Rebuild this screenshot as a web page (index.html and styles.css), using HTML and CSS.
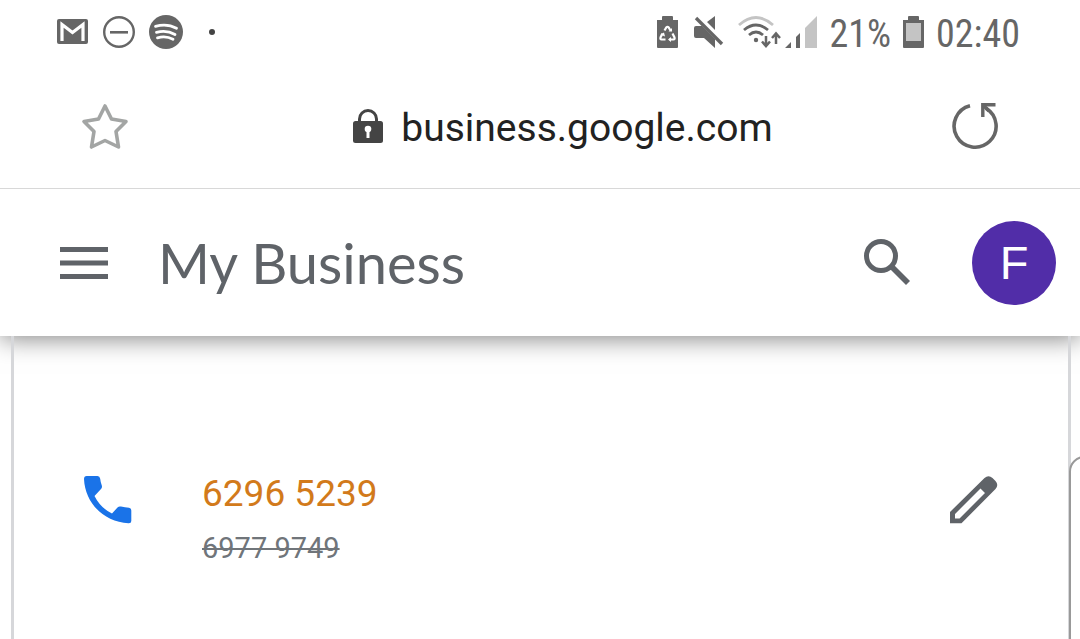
FILE: index.html
```
<!DOCTYPE html>
<html lang="en">
<head>
<meta charset="utf-8">
<meta name="viewport" content="width=device-width, initial-scale=1">
<title>My Business</title>
<link rel="stylesheet" href="styles.css">
</head>
<body>
<div class="status">
  <div class="status-group notices">
    <svg width="32" height="32" viewBox="0 0 32 32" aria-label="Mail"><rect x="0" y="3" width="31" height="25" rx="2" fill="#666"/><path d="M5 25V8.500L15.500 16.500L26 8.500V25" fill="none" stroke="#fff" stroke-width="3.200"/></svg>
    <svg width="32" height="32" viewBox="0 0 32 32" aria-label="Do not disturb"><circle cx="16" cy="16" r="14.800" fill="none" stroke="#666" stroke-width="2.400"/><path d="M7 16.300H25" stroke="#666" stroke-width="2.600"/></svg>
    <svg width="34" height="34" viewBox="0 0 34 34" aria-label="Music"><circle cx="17" cy="17" r="17" fill="#666"/><path d="M6.500 11.300Q18 8 27.500 13.300M7.500 17.300Q17.500 14.500 26 19.500M8.500 22.800Q17 20.500 24 24.300" fill="none" stroke="#fff" stroke-width="2.800" stroke-linecap="round"/></svg>
    <span class="dot"></span>
  </div>
  <div class="status-group system">
    <svg width="22" height="32" viewBox="0 0 22 32" aria-label="Battery saver"><path d="M0 4H5V1Q5 0 6 0H15Q16 0 16 1V4H21V31Q21 32 20 32H1Q0 32 0 31Z" fill="#666"/><path d="M7.500 14.500L9.300 11.500Q10.500 10 11.700 11.500L13.500 14.500M15.500 17.500L17.500 21.500Q18 23.500 16.500 23.500H12.500M8.500 23.500H4.500Q3 23.500 3.500 21.500L5.500 17.500" fill="none" stroke="#fff" stroke-width="2.200"/><path d="M11.500 15.500H15V12ZM14 21V26L11 23.500ZM3.500 18.500L7 16.500L8 20.500Z" fill="#fff"/></svg>
    <svg class="mute" width="30" height="32" viewBox="0 0 30 32" aria-label="Muted"><path d="M0 12Q0 10 2 10H8L21 23V32L10 22H2Q0 22 0 20ZM13 6L21 0V14Z" fill="#666"/><path d="M2 2L28 28" stroke="#666" stroke-width="3.400"/></svg>
    <svg class="wifi" width="44" height="32" viewBox="0 0 44 32" aria-label="Wi-Fi"><g fill="none" stroke-width="2.800"><path d="M1 9Q18 -6 35 9" stroke="#c4c4c4"/><path d="M6 14Q18 4 30 14M11 19Q18 13 25 19" stroke="#666"/></g><circle cx="18" cy="24" r="2.200" fill="#666"/><path d="M28 20V29M24 25.500L28 30L32 25.500M38 28V18M34 22L38 17.500L42 22" fill="none" stroke="#666" stroke-width="2.500"/></svg>
    <svg class="signal" width="32" height="32" viewBox="0 0 32 32" aria-label="Signal"><path d="M0 32L6 26V32ZM11 21L15 17V32H11Z" fill="#666"/><path d="M20 12L32 0V32H20Z" fill="#c4c4c4"/></svg>
    <span class="percent">21%</span>
    <svg class="battery" width="22" height="32" viewBox="0 0 22 32" aria-label="Battery"><path d="M0 4H5V1Q5 0 6 0H15Q16 0 16 1V4H21V31Q21 32 20 32H1Q0 32 0 31Z" fill="#666"/><path d="M3 7H18V25H3Z" fill="#c4c4c4"/></svg>
    <time>02:40</time>
  </div>
</div>
<div class="address">
  <button aria-label="Bookmark"><svg width="48" height="48" viewBox="0 0 48 48"><path d="M24 4L30.500 17L45 19.500L35 29.500L37.500 45L24 38.500L10.500 45L13 29.500L3 19.500L17.500 17Z" fill="none" stroke="#a3a5a4" stroke-width="3.600" stroke-linejoin="round"/></svg></button>
  <div class="url"><svg width="30" height="34" viewBox="0 0 30 34" aria-hidden="true"><path d="M6.500 14V10A8.500 8.500 0 0 1 23.500 10V14" fill="none" stroke="#444" stroke-width="3"/><rect x="0" y="12" width="30" height="22" rx="2.500" fill="#444"/><circle cx="15" cy="20" r="3.300" fill="#fff"/><path d="M15 20V29" stroke="#fff" stroke-width="3"/></svg><span>business.google.com</span></div>
  <button aria-label="Reload"><svg width="48" height="48" viewBox="0 0 48 48"><path d="M19 3.800A21 21 0 1 0 35 6.200" fill="none" stroke="#666" stroke-width="3.600"/><path d="M31.800 15V2.800H44.500" fill="none" stroke="#666" stroke-width="3.400"/><path d="M32 3L38 9" stroke="#666" stroke-width="3.600"/></svg></button>
</div>
<header class="appbar">
  <button aria-label="Menu"><svg width="48" height="48" viewBox="0 0 48 48"><path d="M0 10.500H48M0 24H48M0 37.500H48" stroke="#5f6368" stroke-width="5"/></svg></button>
  <h1>My Business</h1>
  <button aria-label="Search"><svg width="48" height="48" viewBox="0 0 48 48"><circle cx="17" cy="17" r="14.500" fill="none" stroke="#5f6368" stroke-width="5"/><path d="M27 27L44 44" stroke="#5f6368" stroke-width="5.600"/></svg></button>
  <button class="avatar" aria-label="Account F">F</button>
</header>
<main>
  <section class="card">
    <svg width="48" height="48" viewBox="0 0 48 48" aria-label="Phone"><path d="M2.700 0H13.500Q15.800 0 16.200 2.700Q16.500 6 17.800 9.500Q18.400 11.500 17 13L10.500 20Q16.500 32 28 37.500L33.500 31.500Q35 30 37 30.600Q41 31.600 45 31.800Q47.300 32 47.300 34.500V45Q47.300 47.500 44.500 47.300C20 46 1 27 0 3Q0 0 2.700 0Z" fill="#1a73e8"/></svg>
    <div class="numbers">
      <span class="new">6296 5239</span>
      <del>6977 9749</del>
    </div>
    <button aria-label="Edit phone number"><svg width="48" height="48" viewBox="0 0 48 48"><path fill-rule="evenodd" d="M0 36L34.500 2Q38.500 -1.500 42.500 2L45.500 5Q49 9 45.500 13L11.500 47.300H0ZM5 38V42.500H9.500L35 17L30.500 12.500Z" fill="#5f6368"/></svg></button>
  </section>
  <div class="edge"></div>
</main>
</body>
</html>
```
FILE: styles.css
```
* { box-sizing: border-box; }
body {
  margin: 0;
  min-height: 100vh;
  display: flex;
  flex-direction: column;
  overflow: hidden;
  background: #fff;
  font-family: Roboto, "Liberation Sans", sans-serif;
}
svg { display: block; flex: none; }
button {
  padding: 0;
  border: 0;
  background: none;
  font: inherit;
}
.status {
  display: flex;
  justify-content: space-between;
  height: 64px;
  padding: 0 60px 0 57px;
  color: #666;
  font-family: "Roboto Condensed", "Liberation Sans Narrow", Roboto, sans-serif;
  font-size: 38px;
  line-height: 40px;
}
.status-group { display: flex; align-items: center; height: 63px; }
.notices { gap: 14px; }
.dot {
  width: 6px;
  height: 6px;
  margin-left: 12px;
  border-radius: 50%;
  background: #444;
}
.percent, time { padding-top: 5px; }
.mute { margin-left: 15px; }
.wifi { margin-left: 14px; }
.signal { margin: 0 13px 0 3px; }
.battery { margin: 0 11px 0 12px; }
.address {
  display: flex;
  align-items: center;
  justify-content: space-between;
  height: 125px;
  padding: 0 81px;
  border-bottom: 1px solid #d8d8d8;
}
.url {
  display: flex;
  align-items: center;
  gap: 18px;
  margin-left: 46px;
  color: #222;
  font-size: 39px;
  line-height: 48px;
}
.url span { padding-top: 4px; }
.appbar {
  position: relative;
  display: flex;
  align-items: center;
  height: 147px;
  padding: 0 24px 0 60px;
  background: #fff;
  box-shadow: 0 2px 24px rgba(0, 0, 0, 0.5);
  clip-path: inset(0 0 -40px 0);
}
h1 {
  flex: 1;
  margin: 0 0 0 50px;
  color: #5f6368;
  font: 400 56px/64px Lato, sans-serif;
}
.avatar {
  width: 84px;
  height: 84px;
  margin-left: 60px;
  border-radius: 50%;
  background: #512da8;
  color: #fff;
  font-family: "Liberation Sans", sans-serif;
  font-size: 47px;
}
main {
  position: relative;
  flex: 1;
  display: flex;
  padding: 0 9px 0 11px;
}
.card {
  flex: 1;
  display: flex;
  align-items: flex-start;
  padding: 140px 70px 70px;
  border: solid #d6d7da;
  border-width: 0 3px;
}
.numbers {
  flex: 1;
  display: flex;
  flex-direction: column;
  align-items: flex-start;
  gap: 16px;
  margin-left: 70px;
}
.new {
  color: #d27a1b;
  font-size: 37px;
  line-height: 36px;
}
del {
  color: #70757a;
  font-size: 29px;
  line-height: 40px;
}
.edge {
  position: absolute;
  top: 120px;
  right: -20px;
  bottom: -20px;
  width: 31px;
  border: 2px solid #999;
  border-radius: 16px;
  background: #fff;
}
```
